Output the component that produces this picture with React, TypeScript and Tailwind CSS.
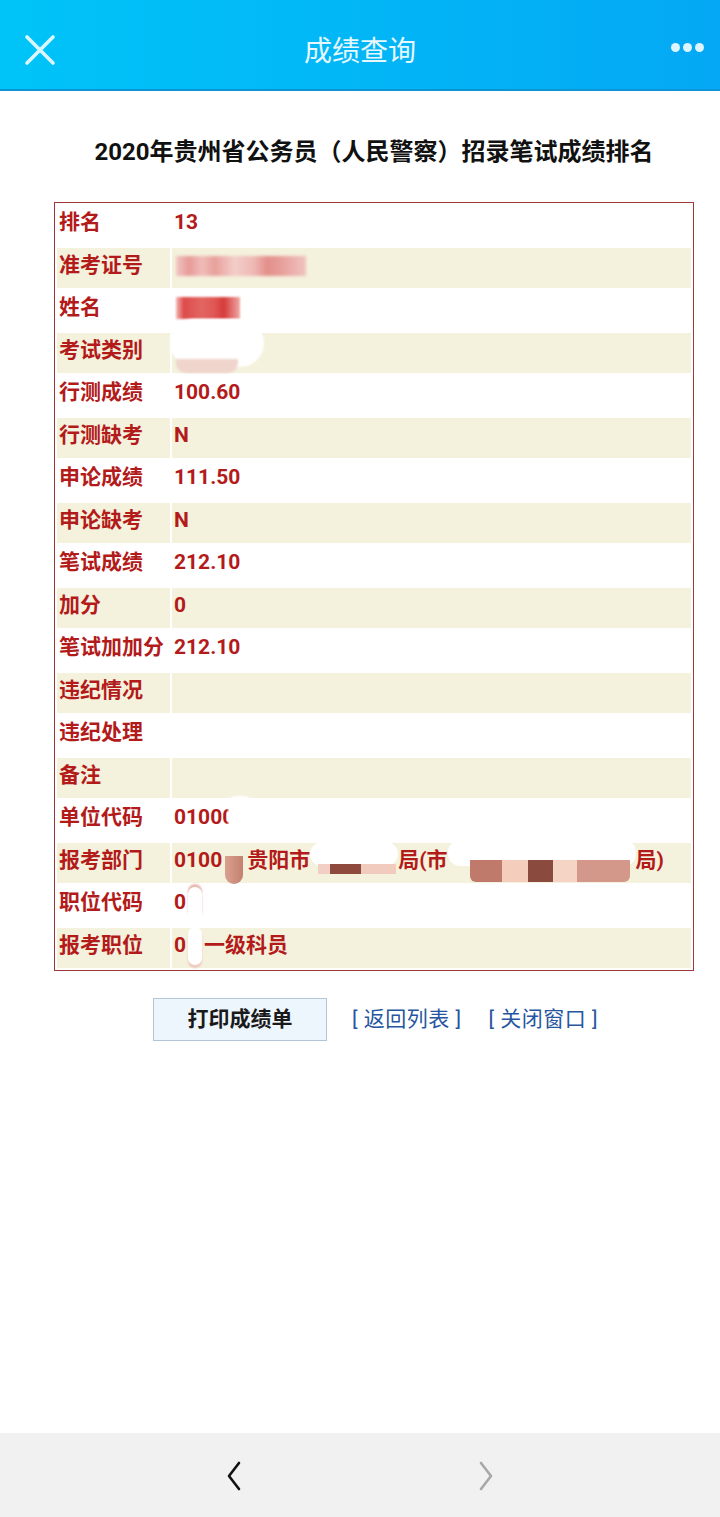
import React from "react";

const CJK = "font-['Roboto','Noto_Sans_CJK_SC',sans-serif]";

type Row = { label: string; value: React.ReactNode };

function Blur({ className }: { className: string }) {
  return <span className={"inline-block align-middle " + className} />;
}

const rows: Row[] = [
  { label: "排名", value: "13" },
  {
    label: "准考证号",
    value: (
      <Blur className="ml-[2px] w-[130px] h-[20px] blur-[1.5px] bg-[linear-gradient(90deg,#f1c6c4_0%,#e79a97_10%,#f0bdb9_20%,#e8a09c_30%,#f3cdc9_45%,#eeb8b4_60%,#e48f8b_70%,#e79d99_80%,#f0c3bf_100%)]" />
    ),
  },
  {
    label: "姓名",
    value: (
      <Blur className="ml-[2px] w-[64px] h-[22px] blur-[1px] bg-[linear-gradient(90deg,#f4b8b5_0%,#dc4b4b_12%,#e26663_40%,#df5754_60%,#d63b3b_75%,#f0a9a6_100%)]" />
    ),
  },
  {
    label: "考试类别",
    value: (
      <span className="relative inline-block w-[92px] h-[20px] align-middle">
        <span className="absolute left-[-4px] top-[-22px] w-[94px] h-[48px] rounded-[24px] bg-white blur-[1px]" />
        <span className="absolute left-[2px] top-[18px] w-[62px] h-[14px] rounded-b-[10px] bg-[#efd5cc] blur-[1px]" />
      </span>
    ),
  },
  { label: "行测成绩", value: "100.60" },
  { label: "行测缺考", value: "N" },
  { label: "申论成绩", value: "111.50" },
  { label: "申论缺考", value: "N" },
  { label: "笔试成绩", value: "212.10" },
  { label: "加分", value: "0" },
  { label: "笔试加加分", value: "212.10" },
  { label: "违纪情况", value: "" },
  { label: "违纪处理", value: "" },
  { label: "备注", value: "" },
  {
    label: "单位代码",
    value: (
      <span className="relative inline-block">
        0100<span className="inline-block w-[7px] overflow-hidden align-bottom">0</span>
        <span className="absolute left-[54px] top-[-6px] w-[24px] h-[36px] rounded-[8px] bg-white blur-[1px]" />
      </span>
    ),
  },
  {
    label: "报考部门",
    value: (
      <span className="relative inline-flex items-center">
        <span>0100</span>
        <span className="relative inline-block w-[25px] h-[20px]">
          <span className="absolute left-[3px] top-[6px] w-[18px] h-[28px] rounded-b-[10px] bg-[linear-gradient(90deg,#d9a190,#c4816f)] blur-[0.5px]" />
        </span>
        <span>贵阳市</span>
        <span className="relative inline-block w-[88px] h-[20px]">
          <span className="absolute left-[0px] top-[-8px] w-[88px] h-[24px] rounded-[12px] bg-white" />
          <span className="absolute left-[8px] top-[14px] w-[78px] h-[10px] bg-[linear-gradient(90deg,#f2cfc4_0%,#f2cfc4_15%,#8f4a3e_15%,#8f4a3e_55%,#f1cbbd_55%,#f1cbbd_100%)] blur-[0.3px]" />
        </span>
        <span>局(市</span>
        <span className="relative inline-block w-[188px] h-[20px]">
          <span className="absolute left-[0px] top-[-10px] w-[188px] h-[26px] rounded-[12px] bg-white" />
          <span className="absolute left-[22px] top-[10px] w-[160px] h-[22px] rounded-b-[6px] bg-[linear-gradient(90deg,#bf7a6c_0%,#bf7a6c_20%,#f4cdbd_20%,#f4cdbd_36%,#8a4a3e_36%,#8a4a3e_52%,#f5d4c5_52%,#f5d4c5_67%,#d4988a_67%,#d4988a_100%)] blur-[0.3px]" />
        </span>
        <span>局)</span>
      </span>
    ),
  },
  {
    label: "职位代码",
    value: (
      <span className="relative inline-flex items-center">
        0
        <span className="relative inline-block w-[14px] h-[20px] ml-[2px]">
          <span className="absolute left-0 top-[-6px] w-[14px] h-[34px] rounded-[7px] bg-white shadow-[0_-3px_2px_#e8b8b0]" />
        </span>
      </span>
    ),
  },
  {
    label: "报考职位",
    value: (
      <span className="relative inline-flex items-center">
        0
        <span className="relative inline-block w-[14px] h-[20px] mx-[2px]">
          <span className="absolute left-0 top-[-8px] w-[14px] h-[38px] rounded-[7px] bg-white shadow-[0_3px_2px_#f0c8c0]" />
        </span>
        一级科员
      </span>
    ),
  },
];

export default function App() {
  return (
    <div className={"w-[720px] h-[1517px] bg-white flex flex-col " + CJK}>
      {/* Header */}
      <div className="h-[91px] shrink-0 bg-[linear-gradient(90deg,#00c4f8,#04a8f4)] border-b-[2px] border-[#0d94d6] relative flex items-center justify-center">
        <svg className="absolute left-[23px] top-[34px]" width="34" height="32" viewBox="0 0 34 32">
          <path d="M4 3 L30 29 M30 3 L4 29" stroke="#d9f6ff" strokeWidth="3.6" strokeLinecap="round" />
        </svg>
        <span className="text-[28px] text-[#e6f8ff] font-['Noto_Sans_CJK_SC',sans-serif] mt-[8px]">成绩查询</span>
        <div className="absolute right-[16px] top-[43px] flex gap-[3px]">
          <span className="w-[9px] h-[9px] rounded-full bg-[#dcf5ff]" />
          <span className="w-[9px] h-[9px] rounded-full bg-[#dcf5ff]" />
          <span className="w-[9px] h-[9px] rounded-full bg-[#dcf5ff]" />
        </div>
      </div>

      {/* Title */}
      <div className="mt-[44px] pl-[28px] text-center text-[24px] font-bold text-[#111] leading-[34px]">
        2020年贵州省公务员（人民警察）招录笔试成绩排名
      </div>

      {/* Table */}
      <div className="mt-[33px] ml-[54px] w-[640px] border-[1.5px] border-[#9b3838]">
        <table className="w-full border-separate border-spacing-[2px]">
          <tbody>
            {rows.map((r, i) => {
              const bg = i % 2 === 1 ? "bg-[#f4f1dc]" : "bg-white";
              return (
                <tr key={r.label}>
                  <td className={"h-[40.5px] w-[113px] pl-[2px] pr-0 pb-[5px] text-[21px] font-bold text-[#b31b1b] whitespace-nowrap align-middle " + bg}>
                    {r.label}
                  </td>
                  <td className={"h-[40.5px] pl-[2px] pb-[5px] text-[21px] font-bold text-[#b31b1b] whitespace-nowrap align-middle " + bg}>
                    {r.value}
                  </td>
                </tr>
              );
            })}
          </tbody>
        </table>
      </div>

      {/* Buttons */}
      <div className="mt-[27px] ml-[153px] flex items-center">
        <div className="w-[174px] h-[43px] bg-[#eef6fd] border border-[#b4c6d6] flex items-center justify-center text-[21px] font-bold text-[#1a1a1a]">
          打印成绩单
        </div>
        <span className="ml-[25px] text-[21px] text-[#2756a0] whitespace-pre tracking-[0.5px]">[ 返回列表 ]</span>
        <span className="ml-[27px] text-[21px] text-[#2756a0] whitespace-pre tracking-[0.5px]">[ 关闭窗口 ]</span>
      </div>

      <div className="flex-1" />

      {/* Bottom bar */}
      <div className="h-[84px] shrink-0 bg-[#f1f1f1] relative">
        <svg className="absolute left-[224px] top-[28px]" width="20" height="30" viewBox="0 0 20 30">
          <path d="M15 2 L5 15 L15 28" fill="none" stroke="#111" strokeWidth="2.6" strokeLinecap="round" strokeLinejoin="round" />
        </svg>
        <svg className="absolute left-[476px] top-[28px]" width="20" height="30" viewBox="0 0 20 30">
          <path d="M5 2 L15 15 L5 28" fill="none" stroke="#a8a8a8" strokeWidth="2.6" strokeLinecap="round" strokeLinejoin="round" />
        </svg>
      </div>
    </div>
  );
}
